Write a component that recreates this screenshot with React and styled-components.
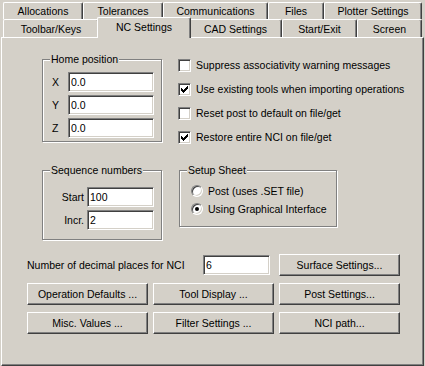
import React from 'react';
import styled, { createGlobalStyle, css } from 'styled-components';

const face = '#d4d0c8';
const shadow = '#808080';
const dark = '#404040';
const light = '#ffffff';

const GlobalStyle = createGlobalStyle`
  html, body {
    margin: 0;
    padding: 0;
    background: ${face};
  }
  body {
    font-family: "Liberation Sans", Arial, sans-serif;
    font-size: 10.5px;
    color: #000;
  }
`

const Window = styled.div`
  width: 425px;
  height: 366px;
  box-sizing: border-box;
  padding: 2px 0 0 1px;
  background: ${face};
  overflow: hidden;
`

const TabRow = styled.div`
  display: flex;
  align-items: flex-end;
  height: ${p => p.$h}px;
  padding-left: 2px;
`

const Tab = styled.div`
  position: relative;
  box-sizing: border-box;
  width: ${p => p.$w}px;
  height: 100%;
  display: flex;
  align-items: center;
  justify-content: center;
  background: ${face};
  border-top: 1px solid ${light};
  border-left: 1px solid ${light};
  border-right: 1px solid ${dark};
  border-top-left-radius: 2px;
  border-top-right-radius: 2px;
  box-shadow: inset -1px 0 0 ${shadow};
  white-space: nowrap;

  ${p => p.$active && css`
    width: ${p.$w + 4}px;
    height: calc(100% + 3px);
    margin: 0 -2px -1px;
    padding-bottom: 3px;
    z-index: 2;
  `}
`

const Panel = styled.div`
  width: 423px;
  height: 329px;
  box-sizing: border-box;
  border: 1px solid;
  border-color: ${light} ${dark} ${dark} ${light};
  box-shadow: inset -1px -1px 0 ${shadow};
  padding: 15px 0 0 25px;
`

const TopSection = styled.div`
  display: flex;
  align-items: flex-start;
  gap: 16px;
  padding-left: 15px;
`

const GroupBox = styled.div`
  position: relative;
  box-sizing: border-box;
  width: ${p => p.$w}px;
  height: ${p => p.$h}px;
  margin-top: ${p => p.$top || 0}px;
  border: 1px solid ${shadow};
  box-shadow: inset 1px 1px 0 ${light}, 1px 1px 0 ${light};
  display: flex;
  flex-direction: column;
`

const Legend = styled.span`
  position: absolute;
  top: -7px;
  left: 7px;
  padding: 0 1px;
  line-height: 13px;
  background: ${face};
`

const HomeBody = styled.div`
  display: flex;
  flex-direction: column;
  gap: 3px;
  padding: 12px 0 0 9px;
`

const FieldRow = styled.div`
  display: flex;
  align-items: center;
  height: 20px;
  justify-content: ${p => (p.$right ? 'flex-end' : 'flex-start')};
`

const AxisLabel = styled.span`
  width: 16px;
`

const SideLabel = styled.span`
  margin-right: 3px;
`

const Field = styled.input`
  box-sizing: border-box;
  width: ${p => p.$w}px;
  height: 20px;
  margin: 0;
  padding: 0 0 0 2px;
  font: inherit;
  color: #000;
  background: ${light};
  border: 1px solid;
  border-color: ${shadow} ${light} ${light} ${shadow};
  box-shadow: inset 1px 1px 0 ${dark}, inset -1px -1px 0 ${face};
  outline: none;
`

const CheckList = styled.div`
  display: flex;
  flex-direction: column;
`

const CheckRow = styled.label`
  display: flex;
  align-items: center;
  gap: 5px;
  height: 24px;
  white-space: nowrap;
`

const CheckBox = styled.span`
  box-sizing: border-box;
  width: 13px;
  height: 13px;
  flex: none;
  background: ${light};
  border: 1px solid;
  border-color: ${shadow} ${light} ${light} ${shadow};
  box-shadow: inset 1px 1px 0 ${dark}, inset -1px -1px 0 ${face};
  display: flex;
  align-items: center;
  justify-content: center;
`

const MidSection = styled.div`
  display: flex;
  align-items: flex-start;
  gap: 17px;
  margin-top: 21px;
  padding-left: 15px;
`

const SeqBody = styled.div`
  display: flex;
  flex-direction: column;
  gap: 3px;
  padding: 16px 7px 0 0;
`

const RadioBody = styled.div`
  display: flex;
  flex-direction: column;
  padding: 11px 0 0 11px;
`

const RadioRow = styled.label`
  display: flex;
  align-items: center;
  gap: 5px;
  height: 18px;
  white-space: nowrap;
`

const Radio = styled.span`
  box-sizing: border-box;
  width: 12px;
  height: 12px;
  flex: none;
  border-radius: 50%;
  background: ${light};
  border: 1px solid;
  border-color: ${shadow} ${light} ${light} ${shadow};
  box-shadow: inset 1px 1px 0 ${dark}, inset -1px -1px 0 ${face};
  display: flex;
  align-items: center;
  justify-content: center;

  &::after {
    content: '';
    width: 4px;
    height: 4px;
    border-radius: 50%;
    background: ${p => (p.$on ? '#000' : 'transparent')};
  }
`

const DecimalRow = styled.div`
  display: flex;
  align-items: center;
  margin-top: 14px;
  height: 22px;
`

const DecimalLabel = styled.span`
  width: 176px;
`

const Button = styled.button`
  box-sizing: border-box;
  width: 121px;
  height: 22px;
  margin: 0 0 0 ${p => p.$gap || 0}px;
  padding: 0;
  font: inherit;
  color: #000;
  background: ${face};
  border: 1px solid;
  border-color: ${light} ${dark} ${dark} ${light};
  box-shadow: inset -1px -1px 0 ${shadow};
  white-space: nowrap;
`

const ButtonGrid = styled.div`
  display: grid;
  grid-template-columns: repeat(3, 121px);
  column-gap: 5px;
  row-gap: 7px;
  margin-top: 7px;
`

const Check = () => (
  <svg width="9" height="9" viewBox="0 0 9 9" shapeRendering="crispEdges">
    <path
      fill="#000"
      d="M1 3h1v3h-1z M2 4h1v3h-1z M3 5h1v3h-1z M4 4h1v3h-1z M5 3h1v3h-1z M6 2h1v3h-1z M7 1h1v3h-1z"
    />
  </svg>
)

const backTabs = [
  ['Allocations', 80],
  ['Tolerances', 80],
  ['Communications', 105],
  ['Files', 56],
  ['Plotter Settings', 98],
]

const frontTabs = [
  ['Toolbar/Keys', 96],
  ['NC Settings', 90],
  ['CAD Settings', 93],
  ['Start/Exit', 75],
  ['Screen', 65],
]

const checks = [
  ['Suppress associativity warning messages', false],
  ['Use existing tools when importing operations', true],
  ['Reset post to default on file/get', false],
  ['Restore entire NCI on file/get', true],
]

const buttons = [
  'Operation Defaults ...',
  'Tool Display ...',
  'Post Settings...',
  'Misc. Values ...',
  'Filter Settings ...',
  'NCI path...',
]

function App() {
  return (
    <Window>
      <GlobalStyle />
      <TabRow $h={17}>
        {backTabs.map(([name, w]) => (
          <Tab key={name} $w={w}>{name}</Tab>
        ))}
      </TabRow>
      <TabRow $h={18}>
        {frontTabs.map(([name, w]) => (
          <Tab key={name} $w={w} $active={name === 'NC Settings'}>{name}</Tab>
        ))}
      </TabRow>

      <Panel>
        <TopSection>
          <GroupBox $w={120} $h={83} $top={6}>
            <Legend>Home position</Legend>
            <HomeBody>
              {['X', 'Y', 'Z'].map(a => (
                <FieldRow key={a}>
                  <AxisLabel>{a}</AxisLabel>
                  <Field $w={86} defaultValue="0.0" readOnly />
                </FieldRow>
              ))}
            </HomeBody>
          </GroupBox>

          <CheckList>
            {checks.map(([text, on]) => (
              <CheckRow key={text}>
                <CheckBox>{on && <Check />}</CheckBox>
                {text}
              </CheckRow>
            ))}
          </CheckList>
        </TopSection>

        <MidSection>
          <GroupBox $w={120} $h={70}>
            <Legend>Sequence numbers</Legend>
            <SeqBody>
              <FieldRow $right>
                <SideLabel>Start</SideLabel>
                <Field $w={67} defaultValue="100" readOnly />
              </FieldRow>
              <FieldRow $right>
                <SideLabel>Incr.</SideLabel>
                <Field $w={67} defaultValue="2" readOnly />
              </FieldRow>
            </SeqBody>
          </GroupBox>

          <GroupBox $w={158} $h={57}>
            <Legend>Setup Sheet</Legend>
            <RadioBody>
              <RadioRow>
                <Radio />
                Post (uses .SET file)
              </RadioRow>
              <RadioRow>
                <Radio $on />
                Using Graphical Interface
              </RadioRow>
            </RadioBody>
          </GroupBox>
        </MidSection>

        <DecimalRow>
          <DecimalLabel>Number of decimal places for NCI</DecimalLabel>
          <Field $w={67} defaultValue="6" readOnly />
          <Button $gap={9}>Surface Settings...</Button>
        </DecimalRow>

        <ButtonGrid>
          {buttons.map(b => (
            <Button key={b}>{b}</Button>
          ))}
        </ButtonGrid>
      </Panel>
    </Window>
  )
}

export default App
